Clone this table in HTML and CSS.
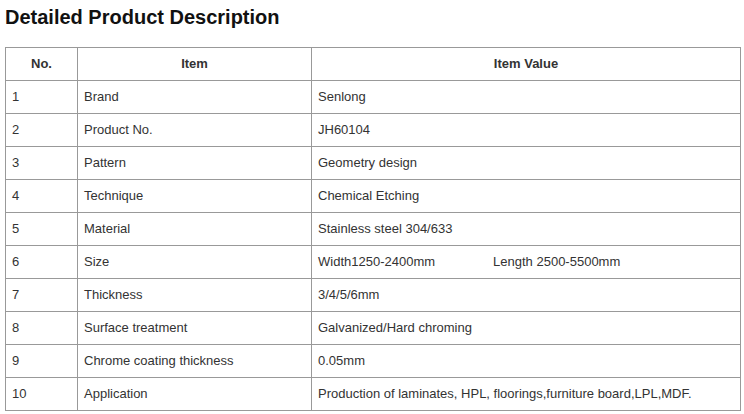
FILE: index.html
```html
<!DOCTYPE html>
<html>
<head>
<meta charset="utf-8">
<link rel="stylesheet" href="styles.css">
</head>
<body>
<h2 class="title">Detailed Product Description</h2>
<table class="spec">
  <colgroup>
    <col class="c-no">
    <col class="c-item">
    <col class="c-val">
  </colgroup>
  <thead>
    <tr><th>No.</th><th>Item</th><th>Item Value</th></tr>
  </thead>
  <tbody>
    <tr><td>1</td><td>Brand</td><td>Senlong</td></tr>
    <tr><td>2</td><td>Product No.</td><td>JH60104</td></tr>
    <tr><td>3</td><td>Pattern</td><td>Geometry design</td></tr>
    <tr><td>4</td><td>Technique</td><td>Chemical Etching</td></tr>
    <tr><td>5</td><td>Material</td><td>Stainless steel 304/633</td></tr>
    <tr><td>6</td><td>Size</td><td>Width1250-2400mm<span class="len">Length 2500-5500mm</span></td></tr>
    <tr><td>7</td><td>Thickness</td><td>3/4/5/6mm</td></tr>
    <tr><td>8</td><td>Surface treatment</td><td>Galvanized/Hard chroming</td></tr>
    <tr><td>9</td><td>Chrome coating thickness</td><td>0.05mm</td></tr>
    <tr><td>10</td><td>Application</td><td>Production of laminates, HPL, floorings,furniture board,LPL,MDF.</td></tr>
  </tbody>
</table>
</body>
</html>
```

FILE: styles.css
```css
html, body {
  margin: 0;
  padding: 0;
  background: #fff;
}
body {
  padding: 0 5px;
  font-family: "Liberation Sans", Arial, sans-serif;
  color: #333;
}
.title {
  margin: 0;
  padding-top: 5px;
  height: 47px;
  box-sizing: border-box;
  font-size: 20px;
  line-height: 24px;
  font-weight: bold;
  color: #111;
}
.spec {
  border-collapse: collapse;
  width: 735px;
  table-layout: fixed;
  font-size: 13px;
}
.c-no { width: 72px; }
.c-item { width: 234px; }
.c-val { width: 429px; }
.spec th, .spec td {
  border: 1px solid #999;
  height: 33px;
  padding: 0 6px;
  box-sizing: border-box;
  text-align: left;
  vertical-align: middle;
  line-height: 20px;
  white-space: nowrap;
}
.spec th {
  text-align: center;
  font-weight: bold;
  color: #333;
}
.len {
  margin-left: 58px;
}
```
